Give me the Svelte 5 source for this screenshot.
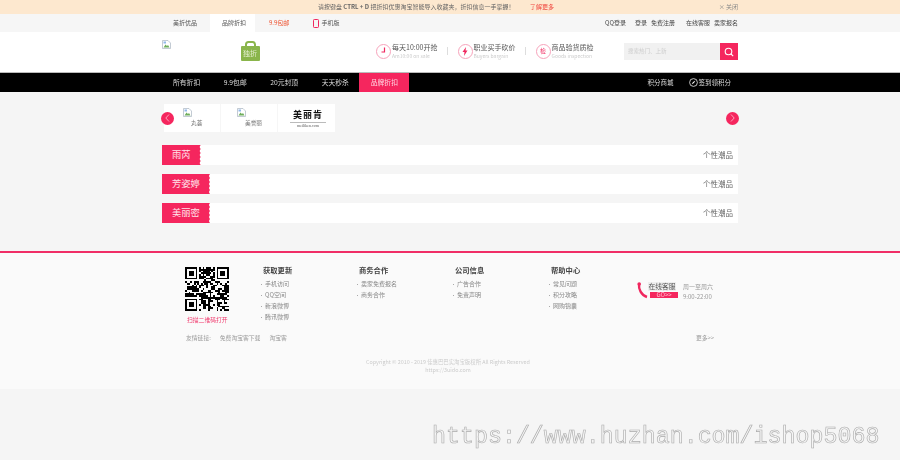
<script>
	const navItems = ['所有折扣', '9.9包邮', '20元封顶', '天天秒杀'];
	const perks = [
		{ icon: 'clock', title: '每天10:00开抢', sub: 'Am10:00 on sale' },
		{ icon: 'bolt', title: '职业买手砍价', sub: 'Buyers bargain' },
		{ icon: 'check', title: '商品验货质检', sub: 'Goods inspection' }
	];
	const brands = ['雨芮', '芳姿婷', '美丽密'];
	const columns = [
		{ title: '获取更新', links: ['手机访问', 'QQ空间', '新浪微博', '腾讯微博'] },
		{ title: '商务合作', links: ['卖家免费报名', '商务合作'] },
		{ title: '公司信息', links: ['广告合作', '免责声明'] },
		{ title: '帮助中心', links: ['常见问题', '积分攻略', '网购锦囊'] }
	];

	/* fake qr code, same size as the real one, modules from a small lfsr */
	const QR = 25;
	function buildQr() {
		let cells = [];
		let seed = 0xace1;
		for (let y = 0; y < QR; y++) {
			for (let x = 0; x < QR; x++) {
				seed = (seed >> 1) ^ (seed & 1 ? 0xb400 : 0);
				let inFinderZone = (x < 8 && y < 8) || (x >= QR - 8 && y < 8) || (x < 8 && y >= QR - 8);
				if (!inFinderZone && seed % 100 < 56) cells.push({ x, y });
			}
		}
		return cells;
	}
	const qrCells = buildQr();
	const finders = [[0, 0], [QR - 7, 0], [0, QR - 7]];
</script>

{#snippet broken()}
	<svg class="broken" width="9" height="9" viewBox="0 0 9 9">
		<path d="M.5.5h5.500l2.500 2.500v5.500h-8z" fill="#fff" stroke="#a9b4c2" stroke-width=".7" />
		<path d="M1.500 7.500l2-3 1.500 1.500 1-1 1.500 2.500z" fill="#6fae5c" />
		<rect x="1.500" y="1.500" width="2.500" height="2" fill="#8fb8ea" />
	</svg>
{/snippet}

<div class="page">
	<div class="notice">
		<span class="notice-text">请按键盘 <b>CTRL + D</b> 把折扣优惠淘宝智能导入收藏夹，折扣信息一手掌握！</span>
		<span class="notice-more">了解更多</span>
		<span class="notice-close">× 关闭</span>
	</div>

	<div class="topbar">
		<div class="wrap topbar-in">
			<div class="top-left">
				<span class="top-tab first">美折优品</span>
				<span class="top-tab on">品牌折扣</span>
				<span class="top-tab red">9.9包邮</span>
				<span class="top-tab phone">
					<svg width="6" height="9" viewBox="0 0 6 9"><rect x=".5" y=".5" width="5" height="8" rx=".8" fill="none" stroke="#f0285f" /></svg>
					手机版
				</span>
			</div>
			<div class="top-right">
				<span>QQ登录</span>
				<span class="g1">登录</span>
				<span class="g2">免费注册</span>
				<span class="g3">在线客服</span>
				<span class="g4">卖家报名</span>
			</div>
		</div>
	</div>

	<header class="head">
		<div class="wrap head-in">
			<div class="logo">
				{@render broken()}
				<div class="bag">
					<svg width="19" height="20" viewBox="0 0 19 20">
						<path d="M5 6V3.500C5 2 6 1 7.500 1h4C13 1 14 2 14 3.500V6" fill="none" stroke="#8ab54b" stroke-width="2" />
						<rect x="0" y="5" width="19" height="15" rx="1" fill="#8ab54b" />
					</svg>
					<span>独折</span>
				</div>
			</div>
			<div class="perks">
				{#each perks as perk, i}
					{#if i > 0}<i class="perk-sep"></i>{/if}
					<div class="perk">
						<span class="perk-icon">
							{#if perk.icon === 'clock'}
								<svg width="8" height="8" viewBox="0 0 8 8"><path d="M4.500.5v4.500H1.500" fill="none" stroke="#f0285f" stroke-width="1.200" /></svg>
							{:else if perk.icon === 'bolt'}
								<svg width="6" height="9" viewBox="0 0 6 9"><path d="M4 0L.5 5h2L2 9l3.500-5.500h-2z" fill="#f0285f" /></svg>
							{:else}
								<span class="perk-char">检</span>
							{/if}
						</span>
						<div class="perk-text">
							<div class="perk-title">{perk.title}</div>
							<div class="perk-sub">{perk.sub}</div>
						</div>
					</div>
				{/each}
			</div>
			<div class="search">
				<span class="search-box">搜索热门、上新</span>
				<span class="search-btn">
					<svg width="10" height="10" viewBox="0 0 10 10"><circle cx="4.500" cy="4.500" r="3.300" fill="none" stroke="#fff" stroke-width="1.100" /><path d="M7 7l2.200 2.200" stroke="#fff" stroke-width="1.100" /></svg>
				</span>
			</div>
		</div>
	</header>

	<nav class="nav">
		<div class="wrap nav-in">
			<div class="nav-left">
				{#each navItems as item}
					<span class="nav-item">{item}</span>
				{/each}
				<span class="nav-active">品牌折扣</span>
			</div>
			<div class="nav-right">
				<span>积分商城</span>
				<span class="sign">
					<svg width="9" height="9" viewBox="0 0 9 9"><circle cx="4.500" cy="4.500" r="3.900" fill="none" stroke="#eee" stroke-width=".8" /><path d="M6.500 2.500L5 5 2.500 6.500 4 4z" fill="#eee" /></svg>
					签到领积分
				</span>
			</div>
		</div>
	</nav>

	<main class="main">
		<div class="wrap">
			<div class="slider">
				<span class="arrow">
					<svg width="5" height="8" viewBox="0 0 5 8"><path d="M4 .5L.8 4 4 7.500" fill="none" stroke="#ffc2d2" stroke-width=".8" /></svg>
				</span>
				<div class="brand-strip">
					<div class="brand-cell">
						{@render broken()}
						<span>丸荟</span>
					</div>
					<div class="brand-cell second">
						{@render broken()}
						<span>美誉丽</span>
					</div>
					<div class="brand-cell logo-cell">
						<b>美丽肯</b>
						<small>meiliken.com</small>
					</div>
				</div>
				<span class="arrow">
					<svg width="5" height="8" viewBox="0 0 5 8"><path d="M1 .5L4.200 4 1 7.500" fill="none" stroke="#ffc2d2" stroke-width=".8" /></svg>
				</span>
			</div>

			<div class="brand-rows">
				{#each brands as brand}
					<div class="brand-row">
						<span class="tag">{brand}</span>
						<span class="row-more">个性潮品</span>
					</div>
				{/each}
			</div>
		</div>
	</main>

	<footer class="foot">
		<div class="foot-in">
			<div class="foot-top">
				<div class="qr">
					<svg width="44" height="44" viewBox="0 0 25 25" shape-rendering="crispEdges">
						{#each qrCells as c}
							<rect x={c.x} y={c.y} width="1" height="1" />
						{/each}
						{#each finders as f}
							<path d="M{f[0]} {f[1]}h7v7h-7zM{f[0] + 1} {f[1] + 1}v5h5v-5z" fill-rule="evenodd" />
							<rect x={f[0] + 2} y={f[1] + 2} width="3" height="3" />
						{/each}
					</svg>
					<span>扫描二维码打开</span>
				</div>
				<div class="cols">
					{#each columns as col}
						<div class="col">
							<h4>{col.title}</h4>
							{#each col.links as link}
								<div class="col-link">{link}</div>
							{/each}
						</div>
					{/each}
				</div>
				<div class="hotline">
					<svg class="hot-phone" width="11" height="17" viewBox="0 0 11 17">
						<path d="M2 2C1.500 7 4 13 10 15" fill="none" stroke="#f0285f" stroke-width="2.400" />
						<circle cx="2.200" cy="2" r="1.800" fill="#f0285f" />
					</svg>
					<div class="hot-mid">
						<span class="hot-label">在线客服</span>
						<span class="hot-go">GO&gt;&gt;</span>
					</div>
					<div class="hot-time">
						<span>周一至周六</span>
						<span>9:00-22:00</span>
					</div>
				</div>
			</div>
			<div class="friends">
				<div class="friend-links">
					<span>友情链接:</span>
					<span>免费淘宝客下载</span>
					<span>淘宝客</span>
				</div>
				<span>更多&gt;&gt;</span>
			</div>
			<div class="copy">
				<div>Copyright © 2010 - 2019 佳惠巴巴实淘宝版权所 All Rights Reserved</div>
				<div>https://3uido.com</div>
			</div>
		</div>
	</footer>
</div>

<div class="stamp">https://www.huzhan.com/ishop5068</div>

<style>
	:global(body) {
		margin: 0;
		background: #f5f5f5;
		font-family: 'Noto Sans CJK SC', 'Liberation Sans', sans-serif;
		overflow: hidden;
	}

	.page {
		font-size: 6px;
		line-height: 1;
		color: #555;
		filter: blur(0.3px);
	}

	.wrap {
		width: 576px;
		margin: 0 auto;
	}

	.notice {
		height: 14px;
		background: #fde8cf;
		display: flex;
		align-items: center;
		padding-left: 318px;
		color: #666;
		font-size: 6px;
		white-space: nowrap;
	}
	.notice-text {
		width: 212px;
	}
	.notice-more {
		color: #f0443c;
	}
	.notice-close {
		margin-left: auto;
		margin-right: 162px;
		color: #888;
	}

	.topbar {
		height: 18px;
		background: #f6f6f6;
	}
	.topbar-in {
		height: 100%;
		display: flex;
		justify-content: space-between;
		align-items: center;
	}
	.top-left {
		display: flex;
		height: 100%;
		align-items: center;
	}
	.top-tab {
		display: flex;
		align-items: center;
		gap: 2px;
		height: 100%;
		white-space: nowrap;
	}
	.top-tab.first {
		padding: 0 13px 0 11px;
	}
	.top-tab.on {
		background: #fff;
		padding: 0 9px 0 12px;
	}
	.top-tab.red {
		color: #ee5533;
		padding: 0 24px 0 14px;
	}
	.top-right {
		display: flex;
		color: #444;
		white-space: nowrap;
	}
	.g1 {
		margin-left: 9px;
	}
	.g2 {
		margin-left: 4px;
	}
	.g3 {
		margin-left: 11px;
	}
	.g4 {
		margin-left: 4px;
	}

	.head {
		height: 40px;
		background: #fff;
	}
	.head-in {
		height: 100%;
		display: flex;
		align-items: flex-start;
	}
	.logo {
		width: 214px;
		display: flex;
		padding-top: 8px;
	}
	.broken {
		display: block;
		flex: none;
	}
	.bag {
		position: relative;
		margin: 1px 0 0 70px;
		width: 19px;
		height: 20px;
	}
	.bag svg {
		display: block;
	}
	.bag span {
		position: absolute;
		left: 2px;
		top: 9px;
		font-size: 7px;
		color: #e6f0d2;
	}

	.perks {
		display: flex;
		align-items: center;
		width: 248px;
		height: 100%;
		margin-top: -1px;
	}
	.perk {
		display: flex;
		align-items: center;
		gap: 1px;
	}
	.perk-sep {
		width: 1px;
		height: 8px;
		background: #ddd;
		margin: 0 9.500px;
	}
	.perk-icon {
		width: 13px;
		height: 13px;
		flex: none;
		border: 1px solid #f7a3bb;
		border-radius: 50%;
		background: #fff;
		display: flex;
		align-items: center;
		justify-content: center;
		color: #f0285f;
	}
	.perk-char {
		font-size: 6px;
	}
	.perk-title {
		font-size: 7px;
		color: #555;
		white-space: nowrap;
	}
	.perk-sub {
		font-size: 5px;
		color: #ccc;
		margin-top: 2px;
		white-space: nowrap;
	}

	.search {
		display: flex;
		margin-top: 11px;
		height: 17px;
		margin-left: auto;
	}
	.search-box {
		width: 92px;
		padding-left: 4px;
		display: flex;
		align-items: center;
		background: #f1f1f1;
		color: #ccc;
		font-size: 5.500px;
	}
	.search-btn {
		width: 18px;
		background: #f5265e;
		display: flex;
		align-items: center;
		justify-content: center;
	}

	.nav {
		height: 19px;
		background: #000;
		border-top: 1px solid #bbb;
		color: #ddd;
		font-size: 6.800px;
		white-space: nowrap;
	}
	.nav-in {
		display: flex;
		justify-content: space-between;
		height: 100%;
	}
	.nav-left {
		display: flex;
		align-items: center;
		padding-left: 11px;
		gap: 23.500px;
	}
	.nav-active {
		margin-left: -13px;
		width: 50px;
		height: 100%;
		background: #f5265e;
		display: flex;
		align-items: center;
		justify-content: center;
		color: #ffd7e2;
	}
	.nav-right {
		display: flex;
		align-items: center;
		padding-right: 7px;
		gap: 15px;
		font-size: 6.500px;
	}
	.sign {
		display: flex;
		align-items: center;
		gap: 1px;
	}

	.main {
		height: 159px;
		padding-top: 12px;
		box-sizing: border-box;
	}
	.slider {
		height: 28px;
		display: flex;
		align-items: center;
		margin-right: -1px;
		margin-left: -1px;
	}
	.arrow {
		width: 13px;
		height: 13px;
		border-radius: 50%;
		background: #f5265e;
		display: flex;
		align-items: center;
		justify-content: center;
		flex: none;
		position: relative;
		z-index: 1;
	}
	.brand-strip {
		display: flex;
		height: 28px;
		width: 171px;
		margin-left: -10px;
		margin-right: auto;
		background: #fff;
	}
	.brand-cell {
		width: 57px;
		box-sizing: border-box;
		border-right: 1px solid #f6f6f6;
		padding: 4px 0 0 19px;
		color: #777;
		font-size: 5.700px;
	}
	.brand-cell.second {
		padding-left: 16px;
	}
	.brand-cell span {
		display: block;
		margin: 3px 0 0 8px;
		white-space: nowrap;
	}
	.logo-cell {
		border: none;
		padding: 7px 0 0 12px;
		color: #111;
		font-family: 'Liberation Serif', 'Noto Sans CJK SC', serif;
		white-space: nowrap;
		text-align: center;
		width: 57px;
	}
	.logo-cell b {
		display: block;
		font-size: 9px;
		letter-spacing: 1px;
		width: 36px;
	}
	.logo-cell small {
		display: block;
		font-size: 4px;
		margin-top: 2px;
		padding-top: 1px;
		width: 36px;
		border-top: 1px solid #bbb;
		color: #555;
	}

	.brand-rows {
		margin-top: 13px;
		display: flex;
		flex-direction: column;
		gap: 9px;
	}
	.brand-row {
		height: 20px;
		background: #fff;
		display: flex;
		align-items: center;
		justify-content: space-between;
	}
	.tag {
		height: 20px;
		padding: 0 10px;
		display: flex;
		align-items: center;
		background: #f5265e;
		color: #ffe3ea;
		font-size: 9.300px;
		clip-path: polygon(0 0, 100% 0, calc(100% - 1px) 2px, 100% 4px, calc(100% - 1px) 6px, 100% 8px, calc(100% - 1px) 10px, 100% 12px, calc(100% - 1px) 14px, 100% 16px, calc(100% - 1px) 18px, 100% 20px, 0 20px);
	}
	.row-more {
		margin-right: 5px;
		font-size: 7.500px;
		color: #666;
	}

	.foot {
		border-top: 2px solid #f02e66;
		height: 136px;
		background: #fafafa;
	}
	.foot-in {
		width: 576px;
		margin: 0 auto;
		padding-left: 24px;
		box-sizing: border-box;
	}
	.foot-top {
		display: flex;
		height: 82px;
		padding-top: 14px;
		box-sizing: border-box;
		white-space: nowrap;
	}
	.qr {
		width: 77px;
		flex: none;
	}
	.qr svg {
		display: block;
		margin-left: -1px;
	}
	.qr span {
		display: block;
		margin: 6px 0 0 1px;
		color: #f0386c;
		font-size: 5.800px;
	}
	.cols {
		display: flex;
		width: 374px;
		flex: none;
	}
	.col {
		width: 96px;
		flex: none;
	}
	.col:last-child {
		width: 86px;
	}
	.col h4 {
		margin: 0 0 7px;
		font-size: 7.300px;
		font-weight: 700;
		color: #444;
	}
	.col-link {
		height: 11px;
		font-size: 6px;
		color: #888;
		padding-left: 2px;
		position: relative;
	}
	.col-link::before {
		content: '';
		position: absolute;
		left: -2px;
		top: 3px;
		width: 1px;
		height: 1px;
		background: #aaa;
	}
	.hotline {
		display: flex;
		margin-top: 15px;
		height: 17px;
	}
	.hot-phone {
		flex: none;
	}
	.hot-mid {
		display: flex;
		flex-direction: column;
		align-items: flex-end;
		gap: 1px;
		width: 30px;
	}
	.hot-label {
		align-self: flex-start;
		background: #eee;
		color: #555;
		font-size: 6.800px;
		width: 28px;
		height: 9px;
		line-height: 8px;
		text-align: center;
	}
	.hot-go {
		width: 28px;
		height: 6px;
		line-height: 6px;
		background: #f5265e;
		color: #ffc9d7;
		font-size: 6px;
		text-align: center;
	}
	.hot-time {
		display: flex;
		flex-direction: column;
		gap: 4px;
		margin-left: 5px;
		padding-top: 2px;
		font-size: 6px;
		color: #999;
	}

	.friends {
		display: flex;
		justify-content: space-between;
		padding-right: 24px;
		color: #999;
		font-size: 5.800px;
		white-space: nowrap;
	}
	.friend-links {
		display: flex;
		gap: 9px;
	}

	.copy {
		margin-top: 17px;
		margin-left: -24px;
		width: 572px;
		text-align: center;
		color: #ccc;
		font-size: 5.400px;
		line-height: 8px;
		white-space: nowrap;
	}

	/* marketplace stamp laid over the shot */
	.stamp {
		position: absolute;
		left: 432px;
		top: 421px;
		font-family: 'Liberation Mono', monospace;
		font-size: 23.300px;
		line-height: 32px;
		white-space: nowrap;
		color: transparent;
		-webkit-text-stroke: 0.6px #aaa;
		filter: blur(0.2px);
	}
</style>
